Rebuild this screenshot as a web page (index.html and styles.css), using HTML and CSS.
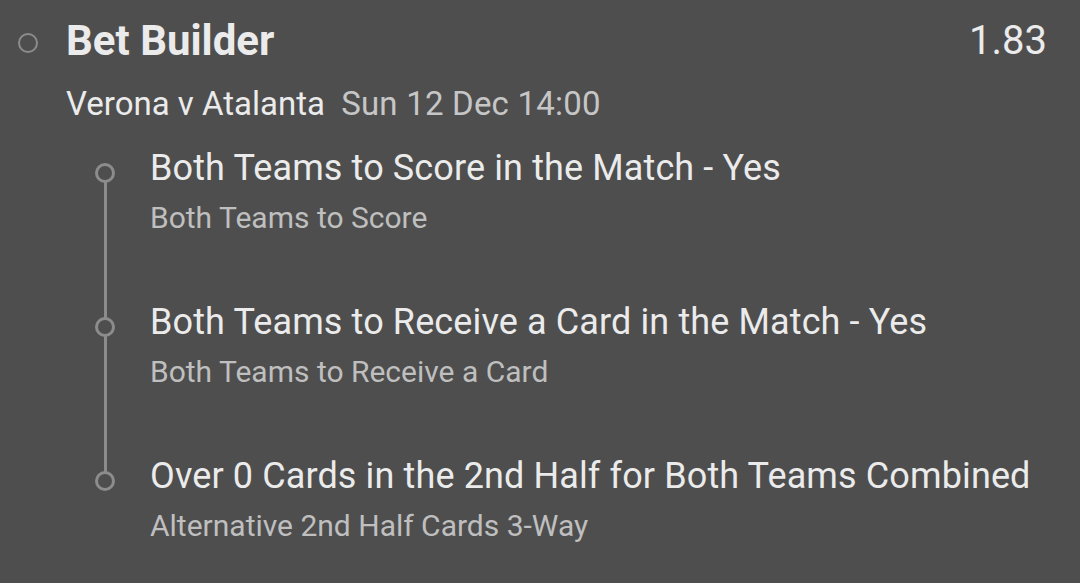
FILE: index.html
```html
<!DOCTYPE html>
<html lang="en">
  <head>
    <meta charset="UTF-8" />
    <meta name="viewport" content="width=device-width, initial-scale=1.0" />
    <title>Bet Builder</title>
    <link rel="stylesheet" href="styles.css">
  </head>
  <body>
    <section class="bet">
      <header class="bet-head">
        <span class="pick"></span>
        <h1 class="bet-title">Bet Builder</h1>
        <span class="odds">1.83</span>
      </header>
      <p class="event">Verona v Atalanta <span class="kickoff">Sun 12 Dec 14:00</span></p>

      <ul class="legs">
        <li class="leg">
          <span class="dot"></span>
          <div>
            <div class="leg-name">Both Teams to Score in the Match - Yes</div>
            <div class="leg-market">Both Teams to Score</div>
          </div>
        </li>
        <li class="leg">
          <span class="dot"></span>
          <div>
            <div class="leg-name">Both Teams to Receive a Card in the Match - Yes</div>
            <div class="leg-market">Both Teams to Receive a Card</div>
          </div>
        </li>
        <li class="leg">
          <span class="dot"></span>
          <div>
            <div class="leg-name">Over 0 Cards in the 2nd Half for Both Teams Combined</div>
            <div class="leg-market">Alternative 2nd Half Cards 3-Way</div>
          </div>
        </li>
      </ul>
    </section>
  </body>
</html>
```

FILE: styles.css
```css
html {
  background: #4e4e4e;
  font-family: Roboto, "Liberation Sans", sans-serif;
  color: #ebebeb;
}

body {
  margin: 0;
}

.bet {
  padding: 13px 33px 0 18px;
}

/* header */
.bet-head {
  display: flex;
  align-items: center;
  height: 56px;
}
.pick {
  width: 16px;
  height: 16px;
  border: 2px solid #8c8c8c;
  border-radius: 50%;
  margin: 4px 28px 0 0;
  flex: none;
}
.bet-title {
  margin: 0;
  font-size: 42px;
  line-height: 56px;
  font-weight: 700;
  flex: 1;
}
.odds {
  font-size: 40px;
  line-height: 56px;
}

.event {
  margin: 15px 0 0 48px;
  font-size: 33px;
  line-height: 40px;
}
.kickoff {
  margin-left: 8px;
  letter-spacing: 0.2px;
  color: #c6c6c6;
}

/* legs */
.legs {
  position: relative;
  list-style: none;
  margin: 20px 0 0 0;
  padding: 0;
}
.legs::before {
  content: "";
  position: absolute;
  left: 86px;
  top: 29px;
  height: 308px;
  width: 3px;
  background: #8c8c8c;
}
.leg {
  display: grid;
  grid-template-columns: 132px auto;
  height: 154px;
}
.dot {
  position: relative;
  z-index: 1;
  width: 14px;
  height: 14px;
  border: 3px solid #8c8c8c;
  border-radius: 50%;
  background: #4e4e4e;
  margin: 19px 0 0 77px;
}
.leg-name {
  font-size: 36px;
  line-height: 48px;
  letter-spacing: 0.12px;
}
.leg-market {
  font-size: 30px;
  line-height: 52px;
  color: #bfbfbf;
}
```
